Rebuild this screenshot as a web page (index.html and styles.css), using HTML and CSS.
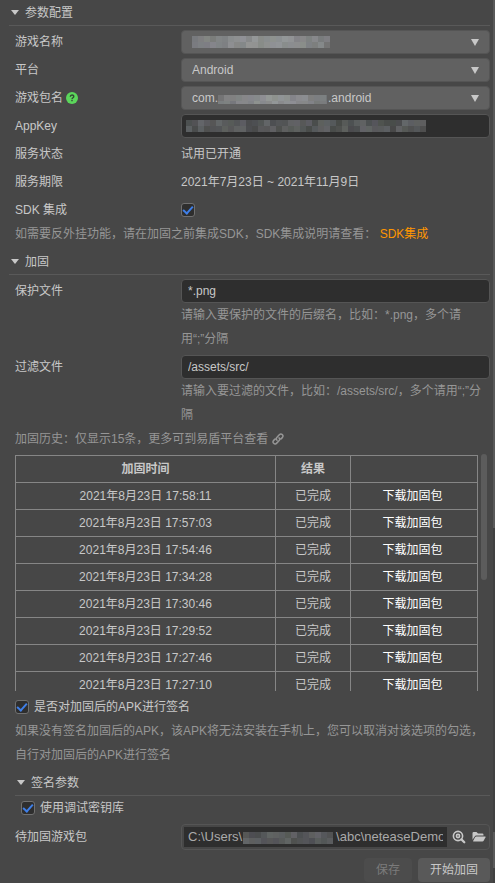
FILE: index.html
```html
<!DOCTYPE html>
<html lang="zh-CN">
<head>
<meta charset="utf-8">
<meta name="viewport" content="width=device-width, initial-scale=1">
<title>加固</title>
<link rel="stylesheet" href="styles.css">
</head>
<body>
<main class="panel">
  <section>
    <h2 class="section-title">参数配置</h2>
    <div class="rows">
      <div class="row">
        <label for="game">游戏名称</label>
        <div class="control arrow"><select id="game"><option></option></select>
          <svg class="mosaic mosaic-game" width="138" height="12" data-seed="7" data-light="1"></svg></div>
      </div>
      <div class="row">
        <label for="platform">平台</label>
        <div class="control arrow"><select id="platform"><option>Android</option></select></div>
      </div>
      <div class="row">
        <label for="package">游戏包名
          <svg class="help" width="12" height="12" viewBox="0 0 12 12"><circle cx="6" cy="6" r="6" fill="#5bd65b"/><path d="M4.3 4.8C4.3 2.5 7.8 2.5 7.8 4.6C7.8 5.8 6 5.7 6 7.2M6 8.1V9.3" fill="none" stroke="#344834" stroke-width="1.4"/></svg>
        </label>
        <div class="control arrow"><select id="package"><option>com.&nbsp;&nbsp;&nbsp;&nbsp;&nbsp;&nbsp;&nbsp;&nbsp;&nbsp;&nbsp;&nbsp;&nbsp;&nbsp;&nbsp;&nbsp;&nbsp;&nbsp;&nbsp;&nbsp;&nbsp;&nbsp;&nbsp;&nbsp;&nbsp;&nbsp;&nbsp;&nbsp;&nbsp;&nbsp;&nbsp;&nbsp;&nbsp;&nbsp;.android</option></select>
          <svg class="mosaic mosaic-package" width="109" height="9" data-seed="3" data-light="1"></svg></div>
      </div>
      <div class="row">
        <label for="appkey">AppKey</label>
        <div class="control"><input class="text" id="appkey" type="text">
          <svg class="mosaic mosaic-key" width="240" height="12" data-seed="11"></svg></div>
      </div>
      <div class="row"><span>服务状态</span><span>试用已开通</span></div>
      <div class="row"><span>服务期限</span><span>2021年7月23日 ~ 2021年11月9日</span></div>
      <div class="row"><label for="sdk">SDK 集成</label><input class="check" id="sdk" type="checkbox" checked></div>
    </div>
    <p class="hint sdk-hint">如需要反外挂功能，请在加固之前集成SDK，SDK集成说明请查看： <a class="accent" href="#">SDK集成</a></p>
  </section>

  <section>
    <h2 class="section-title">加固</h2>
    <div class="files">
      <div class="row top">
        <label for="protect">保护文件</label>
        <div><input class="text" id="protect" type="text" value="*.png"><p class="hint field-hint">请输入要保护的文件的后缀名，比如：*.png，多个请<span class="keep">用“;”</span>分隔</p></div>
      </div>
      <div class="row top">
        <label for="filter">过滤文件</label>
        <div><input class="text" id="filter" type="text" value="/assets/src/"><p class="hint field-hint">请输入要过滤的文件，比如：/assets/src/，多个请<span class="keep">用“;”</span>分隔</p></div>
      </div>
    </div>
    <p class="hint">加固历史：仅显示15条，更多可到易盾平台查看
      <a class="chain" href="#" aria-label="易盾平台"><svg width="12" height="12" viewBox="0 0 12 12" fill="none" stroke="currentColor" stroke-width="1.5" stroke-linecap="round"><path d="M5 7.2C4 6.2 4 5.2 5 4.2L7.3 1.8C8.2 .9 9.3.7 10.3 1.6C11.3 2.5 11.2 3.7 10.3 4.6L9 5.9M7 4.9C8 5.8 8 6.8 7 7.8L4.7 10.1C3.8 11 2.7 11.3 1.7 10.3C.7 9.4.8 8.3 1.7 7.4L3 6.1"/></svg></a></p>
    <div class="history">
      <div class="history-view">
        <table>
          <thead><tr><th class="time">加固时间</th><th class="result">结果</th><th></th></tr></thead>
          <tbody>
            <tr><td>2021年8月23日 17:58:11</td><td>已完成</td><td><a href="#">下载加固包</a></td></tr>
            <tr><td>2021年8月23日 17:57:03</td><td>已完成</td><td><a href="#">下载加固包</a></td></tr>
            <tr><td>2021年8月23日 17:54:46</td><td>已完成</td><td><a href="#">下载加固包</a></td></tr>
            <tr><td>2021年8月23日 17:34:28</td><td>已完成</td><td><a href="#">下载加固包</a></td></tr>
            <tr><td>2021年8月23日 17:30:46</td><td>已完成</td><td><a href="#">下载加固包</a></td></tr>
            <tr><td>2021年8月23日 17:29:52</td><td>已完成</td><td><a href="#">下载加固包</a></td></tr>
            <tr><td>2021年8月23日 17:27:46</td><td>已完成</td><td><a href="#">下载加固包</a></td></tr>
            <tr><td>2021年8月23日 17:27:10</td><td>已完成</td><td><a href="#">下载加固包</a></td></tr>
          </tbody>
        </table>
      </div>
      <div class="thumb"></div>
    </div>
    <label class="check-line"><input class="check" type="checkbox" checked>是否对加固后的APK进行签名</label>
    <p class="hint">如果没有签名加固后的APK，该APK将无法安装在手机上，您可以取消对该选项的勾选，自行对加固后的APK进行签名</p>
  </section>

  <section>
    <h2 class="section-title nested">签名参数</h2>
    <label class="check-line indent"><input class="check" type="checkbox" checked>使用调试密钥库</label>
    <div class="row package-row">
      <label for="path">待加固游戏包</label>
      <div class="control path-box">
        <input id="path" type="text" value="C:\Users\&nbsp;&nbsp;&nbsp;&nbsp;&nbsp;&nbsp;&nbsp;&nbsp;&nbsp;&nbsp;&nbsp;&nbsp;&nbsp;&nbsp;&nbsp;&nbsp;&nbsp;&nbsp;&nbsp;&nbsp;&nbsp;&nbsp;&nbsp;&nbsp;&nbsp;&nbsp;\abc\neteaseDemo">
        <svg class="mosaic mosaic-path" width="90" height="12" data-seed="5"></svg>
        <button class="icon" type="button" aria-label="查看"><svg width="14" height="14" viewBox="0 0 14 14" fill="none" stroke="currentColor"><circle cx="6" cy="6" r="4.6" stroke-width="1.6"/><circle cx="6" cy="6" r="1.6" stroke-width="1.6"/><path d="M9.4 9.4L12.3 12.3" stroke-width="2.2" stroke-linecap="round"/></svg></button>
        <button class="icon" type="button" aria-label="打开文件夹"><svg width="14" height="14" viewBox="0 0 14 14" fill="currentColor"><path d="M.5 9.8V3.2Q.5 2 1.7 2H4.5L6 3.5H10.3Q11.5 3.5 11.5 4.7V5.5H4.2Q3.2 5.5 2.7 6.4Z"/><path d="M4.3 6.4H13.1Q13.9 6.4 13.5 7.2L11.8 10.6Q11.3 11.6 10.3 11.6H1.5Q.8 11.6 1.2 10.8L3.2 7.1Q3.6 6.4 4.3 6.4Z"/></svg></button>
      </div>
    </div>
    <div class="actions"><button class="button" type="button" disabled>保存</button><button class="button primary" type="button">开始加固</button></div>
  </section>
</main>
<div class="page-scroll"><i class="upper"></i><i class="lower"></i></div>
<script src="mosaic.js"></script>
</body>
</html>
```
FILE: styles.css
```css
* { box-sizing: border-box; }
body { margin: 0; background: #474747; color: #c8c8c8; font: 12px/24px "Liberation Sans", "Noto Sans CJK SC", sans-serif; display: flex; min-height: 100vh; overflow: hidden; }
h2, p { margin: 0; }
input, select, button { font: inherit; color: inherit; margin: 0; }
a { color: inherit; text-decoration: none; }
.panel { flex: 1; min-width: 0; padding: 0 3px 0 15px; }
.section-title { height: 26px; margin-left: -6px; border-bottom: 1px solid #595959; display: flex; align-items: center; gap: 6px; font-size: 12px; font-weight: 400; padding-left: 2px; }
.section-title::before { content: ""; border: 4px solid transparent; border-top: 5px solid #c8c8c8; border-bottom: 0; }
.nested { margin: 3px 0 0; }
.rows { padding-top: 2px; }
.row { display: grid; grid-template-columns: 166px minmax(0, 1fr); align-items: center; min-height: 28px; }
.row.top { align-items: start; margin-bottom: 4px; }
.files { padding-top: 4px; margin-bottom: -4px; }
.control { position: relative; display: flex; }
select, .text { width: 100%; height: 24px; border: 1px solid #555; border-radius: 4px; outline: 0; line-height: 20px; }
select { appearance: none; background: #616161; padding: 0 20px 0 10px; }
.text { background: #2e2e2e; padding: 0 6px; display: block; }
.arrow::after { content: ""; position: absolute; right: 11px; top: 9px; border: 4px solid transparent; border-top: 7px solid #c8c8c8; border-bottom: 0; }
.help { vertical-align: -2px; }
.mosaic { position: absolute; }
.mosaic-game { left: 11px; top: 6px; }
.mosaic-package { left: 37px; top: 9px; }
.mosaic-key { left: 5px; top: 6px; }
.mosaic-path { left: 61px; top: 7px; }
.check { appearance: none; flex: none; width: 14px; height: 14px; border: 1px solid #707070; border-radius: 3px; background: #2e2e2e; position: relative; }
.check:checked::after { content: ""; box-sizing: border-box; position: absolute; left: 3px; top: 0; width: 6px; height: 10px; border: solid #3f7fe8; border-width: 0 2px 2px 0; transform: rotate(42deg); }
.hint { color: #969696; }
.field-hint { padding-right: 6px; }
.keep { white-space: nowrap; }
.sdk-hint { margin: -2px 0 3px; }
.accent { color: #ff9600; }
.chain { display: inline-block; vertical-align: -2px; line-height: 0; }
.history { display: flex; gap: 3px; margin-top: 3px; padding-right: 3px; }
.history-view { flex: 1; height: 237px; padding-top: 1px; overflow: hidden; }
table { width: 100%; border-collapse: collapse; table-layout: fixed; }
th, td { border: 1px solid #868686; height: 27px; padding: 0; text-align: center; line-height: 20px; }
td:last-child { padding-right: 3px; }
.time { width: 260px; }
.result { width: 75px; }
td a { color: #fff; }
.thumb { width: 6px; height: 126px; border-radius: 3px; background: #5c5c5c; }
.check-line { display: flex; align-items: center; gap: 5px; height: 28px; margin-top: 2px; margin-bottom: -2px; }
.indent { padding-left: 6px; height: 24px; margin: 0; }
.path-box { height: 26px; border: 1px solid #555; border-radius: 4px; padding: 2px 0 2px 2px; align-items: center; }
#path { flex: 1; min-width: 0; height: 20px; margin-right: 2px; border: 0; outline: 0; background: #2e2e2e; color: #aaa; font-size: 13px; padding: 0 4px; }
.icon { width: 20px; height: 20px; padding: 0; border: 0; background: none; display: grid; place-items: center; }
.package-row { min-height: 34px; }
.actions { display: flex; justify-content: flex-end; gap: 6px; padding-top: 4px; }
.button { height: 24px; padding: 0 12px; border: 0; border-radius: 4px; background: #595959; line-height: 20px; }
.button:disabled { background: #4c4c4c; color: #7b7b7b; }
.page-scroll { width: 2px; background: #404040; display: flex; flex-direction: column; justify-content: space-between; padding-bottom: 15px; }
.page-scroll i { width: 2px; background: #595959; }
.upper { height: 528px; }
.lower { height: 36px; }
```
FILE: mosaic.js
```js
// Fills the masked values with a deterministic block pattern.
document.querySelectorAll('.mosaic').forEach(function (svg) {
  var w = +svg.getAttribute('width'), h = +svg.getAttribute('height');
  var seed = +svg.dataset.seed, light = svg.dataset.light;
  for (var x = 0; x < w; x += 6) {
    for (var y = 0; y < h; y += 6) {
      seed = (seed * 73 + 41) % 1009;
      // Light fields brighten towards the middle of the run.
      var v = light ? 112 + Math.round(22 * Math.sin(Math.PI * x / w)) + seed % 16 : 72 + seed % 28;
      var r = document.createElementNS('http://www.w3.org/2000/svg', 'rect');
      r.setAttribute('x', x); r.setAttribute('y', y);
      r.setAttribute('width', 6); r.setAttribute('height', 6);
      r.setAttribute('fill', 'rgb(' + v + ',' + (v + seed % 5) + ',' + (v + seed % 7) + ')');
      svg.appendChild(r);
    }
  }
});
```
